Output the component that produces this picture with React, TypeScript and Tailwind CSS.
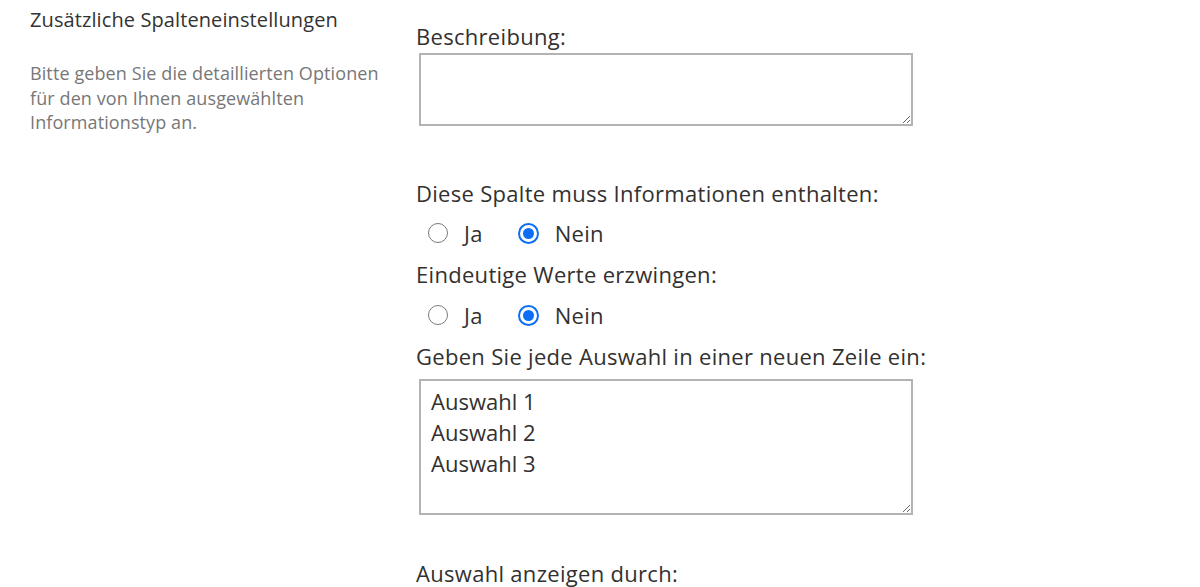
import React from "react"

function Radio({ checked, label }: { checked?: boolean; label: string }) {
  return (
    <label className="flex items-center">
      {checked ? (
        <span className="flex h-[21px] w-[21px] items-center justify-center rounded-full border-[2.5px] border-[#0b6ef5] bg-white">
          <span className="h-[11px] w-[11px] rounded-full bg-[#0b6ef5]" />
        </span>
      ) : (
        <span className="h-[20px] w-[20px] rounded-full border-[1.5px] border-[#7a7a7a] bg-white" />
      )}
      <span className="ml-[16px]">{label}</span>
    </label>
  )
}

function RadioRow() {
  return (
    <div className="flex h-[40px] items-center gap-[35px] pl-[12px]">
      <Radio label="Ja" />
      <Radio checked label="Nein" />
    </div>
  )
}

export default function App() {
  return (
    <div
      className="flex min-h-[587px] bg-white text-[#323130]"
      style={{ fontFamily: '"Segoe UI", "Open Sans", sans-serif' }}
    >
      {/* Left column: section title and help text */}
      <div className="w-[416px] shrink-0 pl-[30px]">
        <h2 className="text-[20px] leading-[40px] tracking-[0.1px] text-[#333]">Zusätzliche Spalteneinstellungen</h2>
        <p className="mt-[21px] w-[360px] text-[18px] leading-[24.5px] tracking-[0.1px] text-[#777]">
          Bitte geben Sie die detaillierten Optionen für den von Ihnen ausgewählten Informationstyp an.
        </p>
      </div>

      {/* Right column: form fields */}
      <div className="flex-1 pt-[22px] text-[22px] tracking-[0.3px]">
        <div className="leading-[28px]">Beschreibung:</div>
        <textarea
          className="ml-[3px] mt-[3px] block h-[73px] w-[494px] border-2 border-[#b3b3b3] bg-white outline-none"
          readOnly
        />

        <div className="mt-[53px] leading-[28px]">Diese Spalte muss Informationen enthalten:</div>
        <div className="mt-[6px]">
          <RadioRow />
        </div>

        <div className="mt-[7px] leading-[28px]">Eindeutige Werte erzwingen:</div>
        <div className="mt-[7px]">
          <RadioRow />
        </div>

        <div className="mt-[7px] leading-[28px]">Geben Sie jede Auswahl in einer neuen Zeile ein:</div>
        <textarea
          className="ml-[3px] mt-[9px] block h-[136px] w-[494px] border-2 border-[#b3b3b3] bg-white px-[10px] pt-[5px] text-[22px] leading-[31px] tracking-normal text-[#323130] outline-none"
          readOnly
          defaultValue={"Auswahl 1\nAuswahl 2\nAuswahl 3"}
        />

        <div className="mt-[44px] leading-[28px]">Auswahl anzeigen durch:</div>
      </div>
    </div>
  )
}
